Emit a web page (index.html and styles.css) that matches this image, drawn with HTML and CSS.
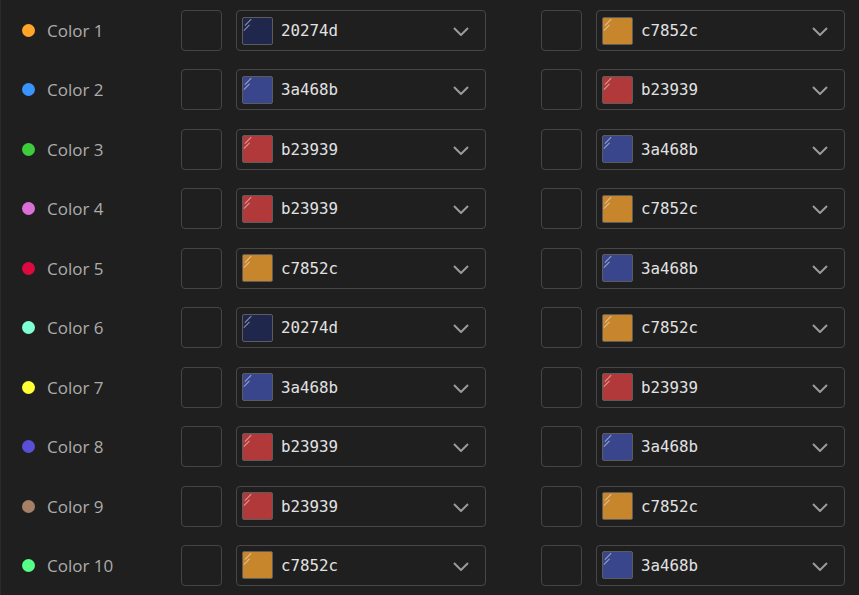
FILE: index.html
```html
<!DOCTYPE html>
<html>
<head>
<meta charset="utf-8">
<link rel="stylesheet" href="styles.css">
</head>
<body>
<div class="list">
  <div class="row"><div class="label"><span class="dot d1"></span>Color 1</div><div class="box"></div><div class="select"><span class="sw s-20274d"></span><span class="val">20274d</span><svg class="chev" viewBox="0 0 16 9"><path d="M1 1l7 7 7-7"/></svg></div><div class="box"></div><div class="select"><span class="sw s-c7852c"></span><span class="val">c7852c</span><svg class="chev" viewBox="0 0 16 9"><path d="M1 1l7 7 7-7"/></svg></div></div>
  <div class="row"><div class="label"><span class="dot d2"></span>Color 2</div><div class="box"></div><div class="select"><span class="sw s-3a468b"></span><span class="val">3a468b</span><svg class="chev" viewBox="0 0 16 9"><path d="M1 1l7 7 7-7"/></svg></div><div class="box"></div><div class="select"><span class="sw s-b23939"></span><span class="val">b23939</span><svg class="chev" viewBox="0 0 16 9"><path d="M1 1l7 7 7-7"/></svg></div></div>
  <div class="row"><div class="label"><span class="dot d3"></span>Color 3</div><div class="box"></div><div class="select"><span class="sw s-b23939"></span><span class="val">b23939</span><svg class="chev" viewBox="0 0 16 9"><path d="M1 1l7 7 7-7"/></svg></div><div class="box"></div><div class="select"><span class="sw s-3a468b"></span><span class="val">3a468b</span><svg class="chev" viewBox="0 0 16 9"><path d="M1 1l7 7 7-7"/></svg></div></div>
  <div class="row"><div class="label"><span class="dot d4"></span>Color 4</div><div class="box"></div><div class="select"><span class="sw s-b23939"></span><span class="val">b23939</span><svg class="chev" viewBox="0 0 16 9"><path d="M1 1l7 7 7-7"/></svg></div><div class="box"></div><div class="select"><span class="sw s-c7852c"></span><span class="val">c7852c</span><svg class="chev" viewBox="0 0 16 9"><path d="M1 1l7 7 7-7"/></svg></div></div>
  <div class="row"><div class="label"><span class="dot d5"></span>Color 5</div><div class="box"></div><div class="select"><span class="sw s-c7852c"></span><span class="val">c7852c</span><svg class="chev" viewBox="0 0 16 9"><path d="M1 1l7 7 7-7"/></svg></div><div class="box"></div><div class="select"><span class="sw s-3a468b"></span><span class="val">3a468b</span><svg class="chev" viewBox="0 0 16 9"><path d="M1 1l7 7 7-7"/></svg></div></div>
  <div class="row"><div class="label"><span class="dot d6"></span>Color 6</div><div class="box"></div><div class="select"><span class="sw s-20274d"></span><span class="val">20274d</span><svg class="chev" viewBox="0 0 16 9"><path d="M1 1l7 7 7-7"/></svg></div><div class="box"></div><div class="select"><span class="sw s-c7852c"></span><span class="val">c7852c</span><svg class="chev" viewBox="0 0 16 9"><path d="M1 1l7 7 7-7"/></svg></div></div>
  <div class="row"><div class="label"><span class="dot d7"></span>Color 7</div><div class="box"></div><div class="select"><span class="sw s-3a468b"></span><span class="val">3a468b</span><svg class="chev" viewBox="0 0 16 9"><path d="M1 1l7 7 7-7"/></svg></div><div class="box"></div><div class="select"><span class="sw s-b23939"></span><span class="val">b23939</span><svg class="chev" viewBox="0 0 16 9"><path d="M1 1l7 7 7-7"/></svg></div></div>
  <div class="row"><div class="label"><span class="dot d8"></span>Color 8</div><div class="box"></div><div class="select"><span class="sw s-b23939"></span><span class="val">b23939</span><svg class="chev" viewBox="0 0 16 9"><path d="M1 1l7 7 7-7"/></svg></div><div class="box"></div><div class="select"><span class="sw s-3a468b"></span><span class="val">3a468b</span><svg class="chev" viewBox="0 0 16 9"><path d="M1 1l7 7 7-7"/></svg></div></div>
  <div class="row"><div class="label"><span class="dot d9"></span>Color 9</div><div class="box"></div><div class="select"><span class="sw s-b23939"></span><span class="val">b23939</span><svg class="chev" viewBox="0 0 16 9"><path d="M1 1l7 7 7-7"/></svg></div><div class="box"></div><div class="select"><span class="sw s-c7852c"></span><span class="val">c7852c</span><svg class="chev" viewBox="0 0 16 9"><path d="M1 1l7 7 7-7"/></svg></div></div>
  <div class="row"><div class="label"><span class="dot d10"></span>Color 10</div><div class="box"></div><div class="select"><span class="sw s-c7852c"></span><span class="val">c7852c</span><svg class="chev" viewBox="0 0 16 9"><path d="M1 1l7 7 7-7"/></svg></div><div class="box"></div><div class="select"><span class="sw s-3a468b"></span><span class="val">3a468b</span><svg class="chev" viewBox="0 0 16 9"><path d="M1 1l7 7 7-7"/></svg></div></div>
</div>
</body>
</html>
```
FILE: styles.css
```css
html, body {
  margin: 0;
  padding: 0;
  background: #1f1f1f;
  height: 100%;
  overflow: hidden;
}
.list {
  border-left: 1px solid #2a2a2a;
  min-height: 100%;
  box-sizing: border-box;
  padding-top: 10px;
  display: flex;
  flex-direction: column;
  gap: 18.44px;
}
.row {
  display: grid;
  grid-template-columns: 166px 41px 250px 82px 249px;
  column-gap: 14px;
  height: 41px;
  align-items: center;
}
.row > .box:nth-child(4) {
  justify-self: end;
}
.label {
  display: flex;
  align-items: center;
  padding-left: 21px;
  font-family: "Open Sans", sans-serif;
  font-size: 17px;
  color: #acacac;
}
.dot {
  width: 13px;
  height: 13px;
  border-radius: 50%;
  margin-right: 12px;
  flex: none;
}
.d1 { background: #ffa628; }
.d2 { background: #3a94ff; }
.d3 { background: #3ccc3c; }
.d4 { background: #da70d6; }
.d5 { background: #dc0a40; }
.d6 { background: #7fffd4; }
.d7 { background: #ffff33; }
.d8 { background: #5a50d8; }
.d9 { background: #a57f66; }
.d10 { background: #55ff88; }
.box {
  width: 41px;
  height: 41px;
  box-sizing: border-box;
  border: 1px solid #454545;
  border-radius: 4px;
}
.select {
  height: 41px;
  box-sizing: border-box;
  border: 1px solid #474747;
  border-radius: 4px;
  display: flex;
  align-items: center;
  padding: 0 16px 0 5px;
}
.sw {
  position: relative;
  width: 31px;
  height: 28px;
  box-sizing: border-box;
  border: 1px solid #5c5c5c;
  border-radius: 2px;
  flex: none;
  overflow: hidden;
}
.sw::before, .sw::after {
  content: "";
  position: absolute;
  height: 1.4px;
  background: rgba(255,255,255,0.5);
  transform: rotate(-45deg);
  transform-origin: left center;
}
.sw::before { left: 2px; top: 7px; width: 9px; }
.sw::after { left: 1px; top: 12px; width: 8px; }
.s-20274d { background: #20274d; }
.s-3a468b { background: #3a468b; }
.s-b23939 { background: #b23939; }
.s-c7852c { background: #c7852c; }
.val {
  margin-left: 8px;
  flex: 1;
  font-family: "DejaVu Sans Mono", monospace;
  font-size: 15.8px;
  color: #e2e2e2;
}
.chev {
  width: 16px;
  height: 9px;
  margin-top: 2px;
  fill: none;
  stroke: #9a9a9a;
  stroke-width: 2;
}
```
